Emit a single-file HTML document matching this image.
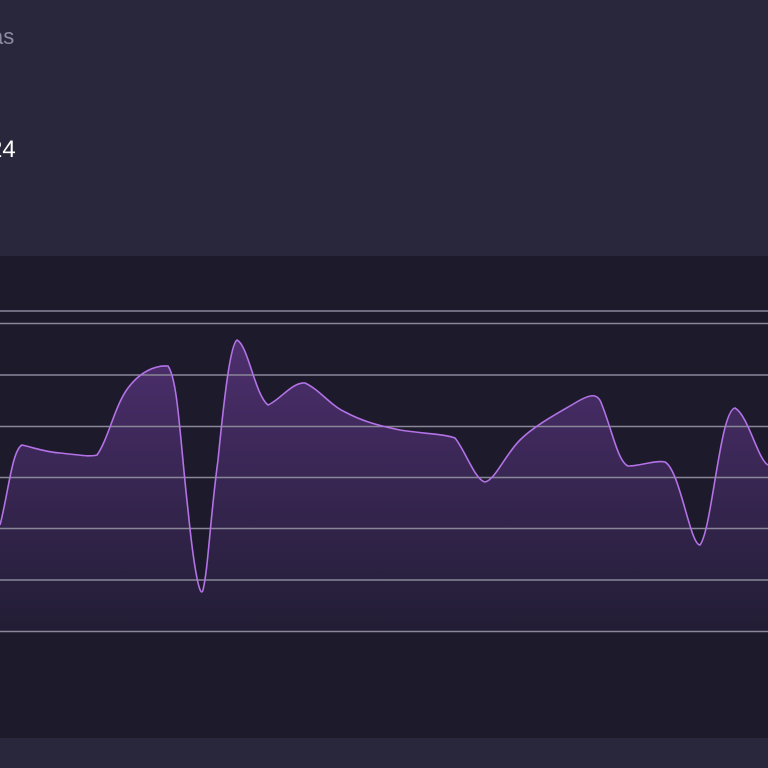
<!DOCTYPE html>
<html><head><style>
html,body{margin:0;padding:0;width:768px;height:768px;overflow:hidden;background:#29273b;font-family:"Liberation Sans",sans-serif}
.t1{position:absolute;left:-9px;top:24px;font-size:22px;color:#8e8aa2}
.t2{position:absolute;left:-11px;top:136px;font-size:24px;color:#fff}
svg{position:absolute;left:0;top:256px}
</style></head><body>
<div class="t1">as</div>
<div class="t2">24</div>
<svg width="768" height="482" viewBox="0 256 768 482">
<defs><linearGradient id="g" x1="0" y1="340" x2="0" y2="631" gradientUnits="userSpaceOnUse">
<stop offset="0" stop-color="#4d2f6e"/><stop offset="1" stop-color="#221d35"/></linearGradient></defs>
<rect x="0" y="256" width="768" height="482" fill="#1d1b2b"/>
<path d="M0,525 C8,495 12,450 22,445 C35,448 45,452 60,453 C80,455 90,457 97,455 C108,440 115,405 128,388 C140,372 155,365 168,366 C178,380 180,440 188,510 C194,570 200,600 203,590 C208,570 210,520 218,460 C224,400 230,345 237,340 C248,345 255,395 268,405 C280,400 292,382 305,383 C320,390 330,405 345,412 C360,420 375,425 400,430 C425,434 445,434 455,438 C465,450 475,480 485,482 C495,480 505,455 520,440 C535,425 560,412 575,403 C590,394 598,392 602,405 C612,430 618,462 628,466 C640,466 655,460 665,462 C680,470 690,545 700,545 C712,530 720,410 735,408 C748,415 758,460 768,465 L768,631 L0,631 Z" fill="url(#g)"/>
<g stroke="#8a8799" stroke-width="1.6">
<line x1="0" y1="311" x2="768" y2="311"/><line x1="0" y1="323.5" x2="768" y2="323.5"/>
<line x1="0" y1="375" x2="768" y2="375"/><line x1="0" y1="426.5" x2="768" y2="426.5"/>
<line x1="0" y1="477.5" x2="768" y2="477.5"/><line x1="0" y1="528.5" x2="768" y2="528.5"/>
<line x1="0" y1="580" x2="768" y2="580"/><line x1="0" y1="631.5" x2="768" y2="631.5"/>
</g>
<path d="M0,525 C8,495 12,450 22,445 C35,448 45,452 60,453 C80,455 90,457 97,455 C108,440 115,405 128,388 C140,372 155,365 168,366 C178,380 180,440 188,510 C194,570 200,600 203,590 C208,570 210,520 218,460 C224,400 230,345 237,340 C248,345 255,395 268,405 C280,400 292,382 305,383 C320,390 330,405 345,412 C360,420 375,425 400,430 C425,434 445,434 455,438 C465,450 475,480 485,482 C495,480 505,455 520,440 C535,425 560,412 575,403 C590,394 598,392 602,405 C612,430 618,462 628,466 C640,466 655,460 665,462 C680,470 690,545 700,545 C712,530 720,410 735,408 C748,415 758,460 768,465" fill="none" stroke="#b372e6" stroke-width="1.6"/>
</svg>
</body></html>
